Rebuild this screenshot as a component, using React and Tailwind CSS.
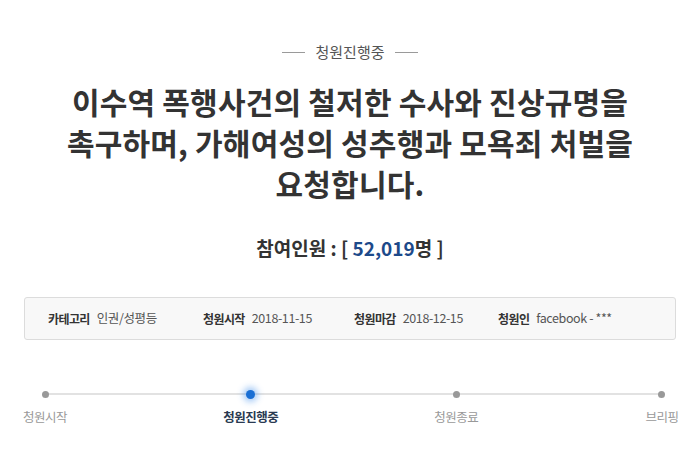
import React from 'react';

const font = { fontFamily: '"Noto Sans CJK KR", "Noto Sans", sans-serif' };

const info = [
  { label: '카테고리', value: '인권/성평등', width: 'w-[155px]' },
  { label: '청원시작', value: '2018-11-15', width: 'w-[151px]' },
  { label: '청원마감', value: '2018-12-15', width: 'w-[144px]' },
  { label: '청원인', value: 'facebook - ***', width: 'flex-1' },
];

const steps = [
  { name: '청원시작', active: false },
  { name: '청원진행중', active: true },
  { name: '청원종료', active: false },
  { name: '브리핑', active: false },
];

const App = () => {
  return (
    <div className="w-[700px] h-[470px] bg-white overflow-hidden" style={font}>
      {/* Status */}
      <div className="pt-[41px] flex items-center justify-center gap-[10px]">
        <span className="w-[23px] h-px bg-[#9a9a9a]" />
        <span className="text-[15px] leading-[22px] text-[#555]">청원진행중</span>
        <span className="w-[23px] h-px bg-[#9a9a9a]" />
      </div>

      {/* Title */}
      <h1 className="mt-[18px] text-center text-[30px] leading-[41px] font-bold text-[#333] tracking-[0.2px]">
        이수역 폭행사건의 철저한 수사와 진상규명을
        <br />
        촉구하며, 가해여성의 성추행과 모욕죄 처벌을
        <br />
        요청합니다.
      </h1>

      {/* Count */}
      <div className="mt-[30px] text-center text-[19px] leading-[28px] font-bold text-[#333]">
        참여인원 : [ <span className="text-[#1d4a8a]">52,019</span>명 ]
      </div>

      {/* Info box */}
      <div className="mt-[35px] mx-[24px] h-[43px] border border-[#dcdcdc] rounded-[3px] bg-[#f8f8f8] flex items-center pl-[23px]">
        {info.map((item) => (
          <div key={item.label} className={`${item.width} flex items-center gap-[7px]`}>
            <span className="text-[12px] font-bold text-[#333] tracking-[-0.6px]">{item.label}</span>
            <span className="text-[12.5px] text-[#555] tracking-[-0.4px]">{item.value}</span>
          </div>
        ))}
      </div>

      {/* Progress */}
      <div className="mt-[47px] ml-[7px] w-[693px] relative">
        <div className="absolute left-[38px] right-[38px] top-[6px] h-[2px] bg-[#e2e2e2]" />
        <div className="relative flex justify-between">
          {steps.map((s) => (
            <div key={s.name} className="w-[76px] flex flex-col items-center">
              <div className="h-[14px] flex items-center justify-center">
                {s.active ? (
                  <span className="w-[9px] h-[9px] rounded-full bg-[#1a6fd4] shadow-[0_0_6px_3px_rgba(60,140,235,0.45)]" />
                ) : (
                  <span className="w-[7px] h-[7px] rounded-full bg-[#999]" />
                )}
              </div>
              <span
                className={`mt-[7px] text-[12.5px] leading-[18px] whitespace-nowrap tracking-[-0.5px] ${
                  s.active ? 'font-bold text-[#2a3a52]' : 'text-[#999]'
                }`}
              >
                {s.name}
              </span>
            </div>
          ))}
        </div>
      </div>
    </div>
  );
};

export default App;
